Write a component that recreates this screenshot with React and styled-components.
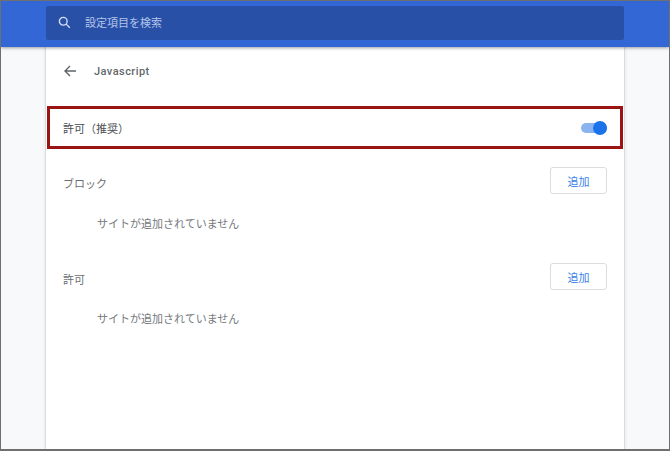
import React from 'react';
import styled, { createGlobalStyle } from 'styled-components';

const GlobalStyle = createGlobalStyle`
  html, body {
    margin: 0;
    padding: 0;
    background: #f8f9fa;
  }
  body {
    font-family: "Roboto", "Noto Sans CJK JP", sans-serif;
  }
`;

const Frame = styled.div`
  box-sizing: border-box;
  width: 670px;
  height: 451px;
  border: 1px solid #6f6f6f;
  border-bottom-width: 2px;
  background: #f8f9fa;
  overflow: hidden;
  display: flex;
  flex-direction: column;
`;

const Header = styled.header`
  flex: none;
  height: 46px;
  background: #3367d6;
  box-shadow: 0 1px 3px rgba(60, 64, 67, 0.5);
  position: relative;
  z-index: 1;
  padding: 5px 45px 0;
  box-sizing: border-box;
`;

const SearchBar = styled.div`
  box-sizing: border-box;
  height: 34px;
  padding: 0 0 1px 11px;
  background: #2850a7;
  border-radius: 2px;
  display: flex;
  align-items: center;
  gap: 13px;
  color: #b4c5ea;
  font-size: 11px;
`;

const SearchText = styled.span`
  padding-bottom: 2px;
`;

const Card = styled.main`
  flex: 1;
  width: 578px;
  margin: 0 auto;
  box-sizing: border-box;
  background: #fff;
  box-shadow: 0 0 0 1px #d9dbdd, 0 0 3px 1px rgba(60, 64, 67, 0.12);
  padding: 0 1px;
`;

const TitleRow = styled.div`
  height: 48px;
  display: flex;
  align-items: center;
  padding-left: 16px;
  gap: 17px;
  color: #63676b;
  font-size: 11px;
  font-weight: 500;
  letter-spacing: 0.45px;
`;

const BackButton = styled.span`
  display: flex;
  width: 14px;
  height: 14px;
`;

const Highlight = styled.section`
  box-sizing: border-box;
  height: 43px;
  margin-top: 11px;
  border: 3px solid #9b1414;
  display: flex;
  align-items: center;
  justify-content: space-between;
  padding: 0 13px;
  color: #4a4d50;
  font-size: 11px;
`;

const Toggle = styled.span`
  position: relative;
  display: block;
  width: 26px;
  height: 10px;
  border-radius: 5px;
  background: #8ab4f0;
`;

const Knob = styled.span`
  position: absolute;
  right: 0;
  top: -2px;
  width: 14px;
  height: 14px;
  border-radius: 50%;
  background: #1a73e8;
`;

const SiteSection = styled.section`
  padding: 0 16px;
  margin-top: ${(p) => p.$top}px;
`;

const SectionHead = styled.div`
  display: flex;
  align-items: center;
  justify-content: space-between;
  height: 27px;
`;

const SectionLabel = styled.span`
  padding-top: 4px;
  color: #6b6f73;
  font-size: 11px;
`;

const AddButton = styled.button`
  box-sizing: border-box;
  width: 57px;
  height: 27px;
  padding: 0;
  background: #fff;
  border: 1px solid #dadce0;
  border-radius: 3px;
  color: #3b82ea;
  font: inherit;
  font-size: 11px;
`;

const Empty = styled.div`
  margin-top: ${(p) => p.$gap}px;
  padding-left: 34px;
  height: 17px;
  line-height: 17px;
  color: #75797d;
  font-size: 11px;
`;

export default function App() {
  return (
    <>
      <GlobalStyle />
      <Frame>
        <Header>
          <SearchBar>
            <svg width="15" height="15" viewBox="0 0 24 24" fill="none" stroke="#d5def3" strokeWidth="2.2">
              <circle cx="10" cy="10" r="6.2" />
              <path d="M14.6 14.6 20.5 20.5" />
            </svg>
            <SearchText>設定項目を検索</SearchText>
          </SearchBar>
        </Header>
        <Card>
          <TitleRow>
            <BackButton>
              <svg width="14" height="14" viewBox="0 0 14 14" fill="none" stroke="#5f6368" strokeWidth="1.4">
                <path d="M13 7H2M7 2 2 7l5 5" />
              </svg>
            </BackButton>
            Javascript
          </TitleRow>
          <Highlight>
            許可（推奨）
            <Toggle>
              <Knob />
            </Toggle>
          </Highlight>
          <SiteSection $top={18}>
            <SectionHead>
              <SectionLabel>ブロック</SectionLabel>
              <AddButton>追加</AddButton>
            </SectionHead>
            <Empty $gap={22}>サイトが追加されていません</Empty>
          </SiteSection>
          <SiteSection $top={30}>
            <SectionHead>
              <SectionLabel>許可</SectionLabel>
              <AddButton>追加</AddButton>
            </SectionHead>
            <Empty $gap={21}>サイトが追加されていません</Empty>
          </SiteSection>
        </Card>
      </Frame>
    </>
  );
}
